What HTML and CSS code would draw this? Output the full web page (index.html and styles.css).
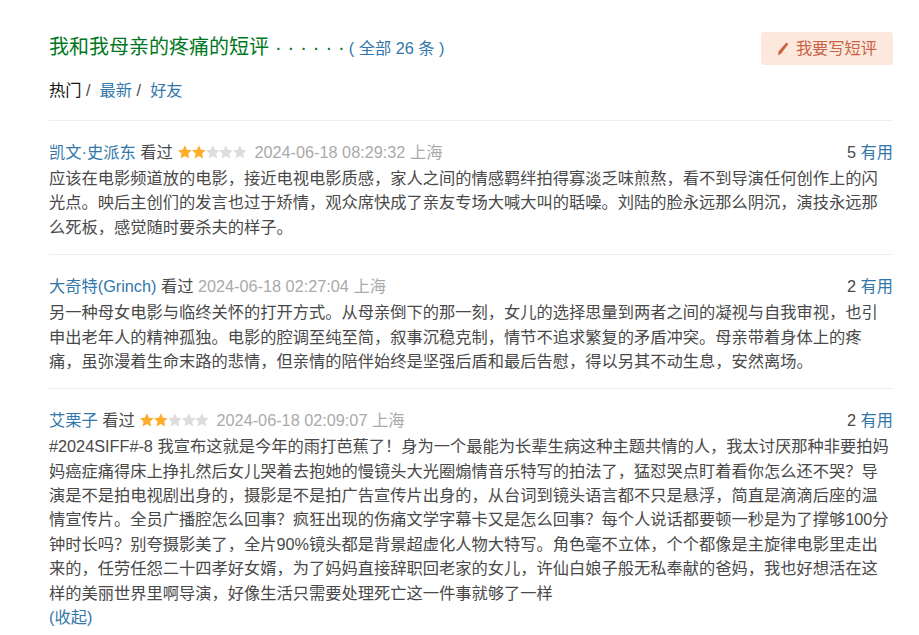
FILE: index.html
```html
<!DOCTYPE html>
<html lang="zh-CN">
<head>
  <meta charset="UTF-8">
  <title>我和我母亲的疼痛的短评</title>
  <link rel="stylesheet" href="styles.css">
</head>
<body>
  <svg class="defs" width="0" height="0">
    <symbol id="star" viewBox="0 0 14 14">
      <path d="M7 0.2l2.1 4.5 4.9 0.6-3.6 3.3 1 4.9L7 11.1l-4.4 2.4 1-4.9L0 5.3l4.9-0.6z"/>
    </symbol>
  </svg>

  <div class="page">
    <div class="head">
      <h2 class="title">我和我母亲的疼痛的短评<span class="dots"> · · · · · ·</span><span class="total">( <a href="#">全部 26 条</a> )</span></h2>
      <a class="write-btn" href="#">
        <svg class="pen" viewBox="0 0 12 14" width="12" height="14"><path d="M9.2 0.8c0.9-0.3 2 0.6 1.8 1.6L4.4 11.2 1.2 13.4l0.3-3.9z"/></svg>
        我要写短评
      </a>
    </div>

    <div class="tabs"><span class="on">热门</span> / &nbsp;<a href="#">最新</a> / &nbsp;<a href="#">好友</a></div>

    <div class="comment">
      <div class="meta">
        <div class="who">
          <a href="#">凯文·史派东</a> 看过
          <span class="stars">
            <svg class="full"><use href="#star"/></svg><svg class="full"><use href="#star"/></svg><svg><use href="#star"/></svg><svg><use href="#star"/></svg><svg><use href="#star"/></svg>
          </span>
          <span class="time">2024-06-18 08:29:32 上海</span>
        </div>
        <div class="votes">5 <a href="#">有用</a></div>
      </div>
      <p>应该在电影频道放的电影，接近电视电影质感，家人之间的情感羁绊拍得寡淡乏味煎熬，看不到导演任何创作上的闪光点。映后主创们的发言也过于矫情，观众席快成了亲友专场大喊大叫的聒噪。刘陆的脸永远那么阴沉，演技永远那么死板，感觉随时要杀夫的样子。</p>
    </div>

    <div class="comment">
      <div class="meta">
        <div class="who">
          <a href="#">大奇特(Grinch)</a> 看过
          <span class="time">2024-06-18 02:27:04 上海</span>
        </div>
        <div class="votes">2 <a href="#">有用</a></div>
      </div>
      <p>另一种母女电影与临终关怀的打开方式。从母亲倒下的那一刻，女儿的选择思量到两者之间的凝视与自我审视，也引申出老年人的精神孤独。电影的腔调至纯至简，叙事沉稳克制，情节不追求繁复的矛盾冲突。母亲带着身体上的疼痛，虽弥漫着生命末路的悲情，但亲情的陪伴始终是坚强后盾和最后告慰，得以另其不动生息，安然离场。</p>
    </div>

    <div class="comment">
      <div class="meta">
        <div class="who">
          <a href="#">艾栗子</a> 看过
          <span class="stars">
            <svg class="full"><use href="#star"/></svg><svg class="full"><use href="#star"/></svg><svg><use href="#star"/></svg><svg><use href="#star"/></svg><svg><use href="#star"/></svg>
          </span>
          <span class="time">2024-06-18 02:09:07 上海</span>
        </div>
        <div class="votes">2 <a href="#">有用</a></div>
      </div>
      <p>#2024SIFF#-8 我宣布这就是今年的雨打芭蕉了！身为一个最能为长辈生病这种主题共情的人，我太讨厌那种非要拍妈妈癌症痛得床上挣扎然后女儿哭着去抱她的慢镜头大光圈煽情音乐特写的拍法了，猛怼哭点盯着看你怎么还不哭？导演是不是拍电视剧出身的，摄影是不是拍广告宣传片出身的，从台词到镜头语言都不只是悬浮，简直是滴滴后座的温情宣传片。全员广播腔怎么回事？疯狂出现的伤痛文学字幕卡又是怎么回事？每个人说话都要顿一秒是为了撑够100分钟时长吗？别夸摄影美了，全片90%镜头都是背景超虚化人物大特写。角色毫不立体，个个都像是主旋律电影里走出来的，任劳任怨二十四孝好女婿，为了妈妈直接辞职回老家的女儿，许仙白娘子般无私奉献的爸妈，我也好想活在这样的美丽世界里啊导演，好像生活只需要处理死亡这一件事就够了一样<br><a href="#">(收起)</a></p>
    </div>
  </div>
</body>
</html>
```
FILE: styles.css
```css
html, body {
  margin: 0;
  height: 635px;
  overflow: hidden;
}

body {
  background: #fff;
  color: #494949;
  font-family: "Liberation Sans", "Noto Sans CJK SC", sans-serif;
  font-size: 16.25px;
  line-height: 25px;
}

a {
  color: #37a;
  text-decoration: none;
}

.defs {
  display: block;
  height: 0;
}

.page {
  width: 844px;
  padding: 30px 0 0 49px;
}

.head {
  display: flex;
  justify-content: space-between;
  align-items: flex-start;
  height: 44px;
}

.title {
  margin: 0;
  padding-top: 5px;
  color: #007722;
  font-size: 20px;
  font-weight: normal;
  line-height: 25px;
}

.dots {
  word-spacing: 0.4px;
}

.total {
  margin-left: 4px;
  font-size: 16.25px;
  color: #37a;
}

.write-btn {
  display: flex;
  align-items: center;
  justify-content: center;
  gap: 7px;
  width: 132px;
  height: 33px;
  margin-top: 2px;
  background: #fce8dc;
  border-radius: 3px;
  color: #ca6445;
}

.pen {
  fill: #ca6445;
}

.tabs {
  padding: 4px 0 17px;
  border-bottom: 1px solid #eee;
  margin-bottom: 19px;
}

.tabs .on {
  color: #111;
}

.comment {
  padding-bottom: 15px;
  border-bottom: 1px solid #eee;
  margin-bottom: 19px;
}

.comment:last-child {
  border-bottom: none;
}

.meta {
  display: flex;
  justify-content: space-between;
  height: 25px;
  margin-bottom: 1px;
}

.stars {
  display: inline-flex;
  margin: 0 3px 0 1px;
  vertical-align: -1px;
}

.stars svg {
  width: 13.75px;
  height: 14px;
  fill: #ddd;
}

.stars svg.full {
  fill: #ffac2d;
}

.time {
  color: #aaa;
}

.comment p {
  margin: 0;
  line-height: 24.375px;
}
```
